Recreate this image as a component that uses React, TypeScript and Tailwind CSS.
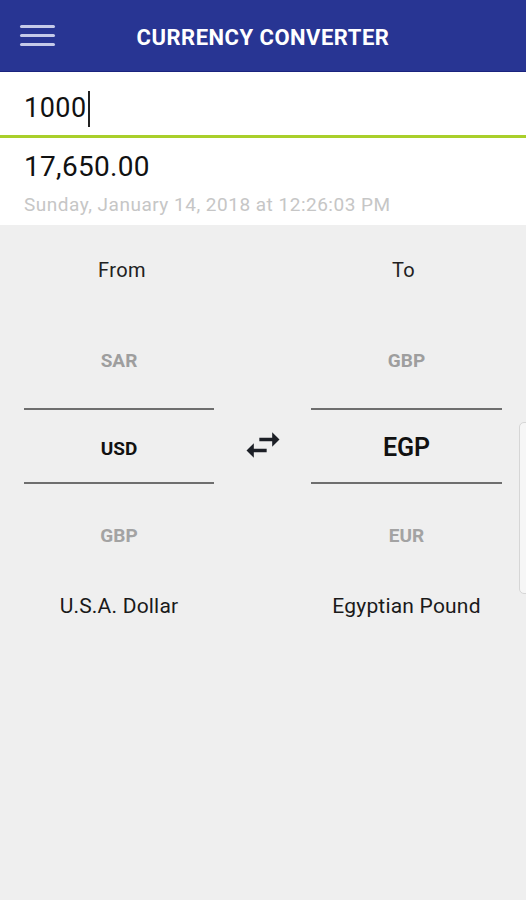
type Side = {
  label: string;
  above: string;
  current: string;
  below: string;
  name: string;
  big?: boolean;
};

const sides: Side[] = [
  { label: 'From', above: 'SAR', current: 'USD', below: 'GBP', name: 'U.S.A. Dollar' },
  { label: 'To', above: 'GBP', current: 'EGP', below: 'EUR', name: 'Egyptian Pound', big: true },
];

function SwapIcon() {
  return (
    <svg width="44" height="44" viewBox="0 0 24 24" className="fill-[#1c1f26]">
      <path d="M6.99 11L3 15l3.99 4v-3H14v-2H6.99v-3zM21 9l-3.99-4v3H10v2h7.01v3L21 9z" />
    </svg>
  );
}

function Picker({ side, shift }: { side: Side; shift: string }) {
  return (
    <div className="flex flex-col">
      <div className={`mt-[25px] flex h-10 items-center justify-center text-[20px] tracking-[0.4px] text-[#212121] ${shift}`}>
        {side.label}
      </div>
      <div className="mt-[51px] flex h-10 items-center justify-center text-[19px] font-bold text-[#9e9e9e]">
        {side.above}
      </div>
      <div className="mt-[27px] h-[2px] bg-[#6e6e6e]" />
      <div
        className={`flex h-[72px] items-center justify-center text-[#111] ${
          side.big ? 'pt-1 text-[25px] font-semibold' : 'pt-[6px] text-[19px] font-bold'
        }`}
      >
        {side.current}
      </div>
      <div className="h-[2px] bg-[#6e6e6e]" />
      <div className="mt-8 flex h-10 items-center justify-center text-[19px] font-bold text-[#a3a3a3]">
        {side.below}
      </div>
      <div className="mt-[31px] flex h-10 items-center justify-center text-[21px] tracking-[0.2px] text-[#1a1a1a]">
        {side.name}
      </div>
    </div>
  );
}

export default function App() {
  return (
    <div className="relative flex h-[900px] w-[526px] flex-col overflow-hidden bg-[#efefef] font-['Roboto','Liberation_Sans',sans-serif]">
      <header className="grid h-[72px] grid-cols-[1fr_auto_1fr] items-center border-b border-[#1a237e] bg-[#283593]">
        <div className="flex flex-col gap-[6px] pl-5">
          <span className="h-[3px] w-[35px] rounded-sm bg-[#c5cae9]" />
          <span className="h-[3px] w-[35px] rounded-sm bg-[#c5cae9]" />
          <span className="h-[3px] w-[35px] rounded-sm bg-[#c5cae9]" />
        </div>
        <h1 className="pt-[3px] text-[22px] font-bold tracking-[0.5px] text-white">CURRENCY CONVERTER</h1>
        <div />
      </header>

      <div className="flex h-[63px] items-center bg-white px-6 pt-[10px]">
        <span className="text-[27px] leading-none tracking-[0.5px] text-[#111]">1000</span>
        <span className="ml-[1px] h-[36px] w-[2px] bg-[#222]" />
      </div>
      <div className="h-[3px] bg-[#a9cf2a]" />

      <div className="flex h-[87px] flex-col bg-white px-6">
        <div className="mt-[12px] text-[28px] leading-[34px] tracking-[0.3px] text-[#111]">17,650.00</div>
        <div className="mt-[9px] text-[19px] leading-[24px] tracking-[0.5px] text-[#c6c6c6]">
          Sunday, January 14, 2018 at 12:26:03 PM
        </div>
      </div>

      <div className="grid grid-cols-[190px_1fr_191px] px-6">
        <Picker side={sides[0]} shift="translate-x-[3px]" />
        <div className="flex justify-center pt-[198px]">
          <SwapIcon />
        </div>
        <Picker side={sides[1]} shift="-translate-x-[3px]" />
      </div>

      <div className="absolute right-[-6px] top-[422px] h-[172px] w-[13px] rounded-[5px] border border-[#d6d6d6] bg-[#f6f6f6]" />
    </div>
  );
}
